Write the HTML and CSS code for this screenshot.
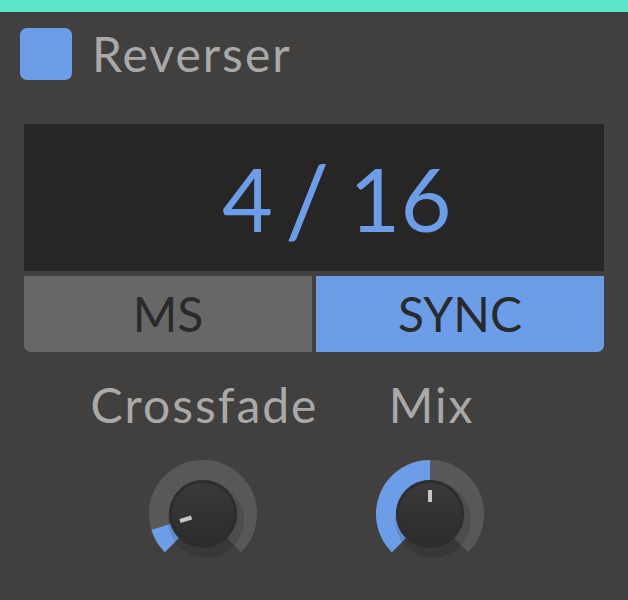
FILE: index.html
```html
<!DOCTYPE html>
<html lang="en">
<head>
    <meta charset="UTF-8">
    <meta name="viewport" content="width=device-width, initial-scale=1.0">
    <title>Reverser</title>
    <link rel="stylesheet" href="styles.css">
</head>
<body>
    <div class="top-bar"></div>

    <div class="plugin">
        <div class="header">
            <div class="enable-box"></div>
            <div class="title">Reverser</div>
        </div>

        <div class="display">
            <div class="display-value"><span>4</span><span class="sep">/</span><span>16</span></div>
        </div>
        <div class="mode-switch">
            <div class="mode-btn">MS</div>
            <div class="mode-btn active">SYNC</div>
        </div>

        <div class="knobs">
            <div class="knob-col">
                <div class="knob-label">Crossfade</div>
                <svg class="knob" width="108" height="108" viewBox="0 0 108 108">
                    <path class="track" d="M 22.89 85.11 A 44 44 0 1 1 85.11 85.11"/>
                    <path class="value" d="M 22.89 85.11 A 44 44 0 0 1 11.92 66.86"/>
                    <circle class="shadow" cx="57" cy="60" r="38"/>
                    <circle class="rim" cx="54" cy="54" r="34"/>
                    <circle class="face" cx="54" cy="54" r="31"/>
                    <rect class="pointer" x="52" y="30" width="4" height="12" transform="rotate(-107 54 54)"/>
                </svg>
            </div>
            <div class="knob-col">
                <div class="knob-label">Mix</div>
                <svg class="knob" width="108" height="108" viewBox="0 0 108 108">
                    <path class="track" d="M 22.89 85.11 A 44 44 0 1 1 85.11 85.11"/>
                    <path class="value" d="M 22.89 85.11 A 44 44 0 0 1 54 10"/>
                    <circle class="shadow" cx="57" cy="60" r="38"/>
                    <circle class="rim" cx="54" cy="54" r="34"/>
                    <circle class="face" cx="54" cy="54" r="31"/>
                    <rect class="pointer" x="52" y="30" width="4" height="12"/>
                </svg>
            </div>
        </div>
    </div>

    <svg width="0" height="0" class="defs">
        <defs>
            <linearGradient id="faceGrad" x1="0" y1="0" x2="0" y2="1">
                <stop offset="0" stop-color="#393939"/>
                <stop offset="1" stop-color="#2c2c2c"/>
            </linearGradient>
        </defs>
    </svg>
</body>
</html>
```

FILE: styles.css
```css
body {
    margin: 0;
    background: #42403f;
    font-family: Lato, "Open Sans", sans-serif;
    height: 600px;
    overflow: hidden;
}

.top-bar {
    height: 12px;
    background: #5ce6c8;
}

.plugin {
    padding: 16px 24px 0 24px;
}

.header {
    display: flex;
    align-items: center;
    margin-left: -4px;
    height: 52px;
}

.enable-box {
    width: 52px;
    height: 52px;
    border-radius: 7px;
    background: #6b9de8;
}

.title {
    margin-left: 20px;
    font-size: 48px;
    line-height: 52px;
    letter-spacing: 2px;
    color: #a9a9a9;
}

.display {
    margin-top: 44px;
    height: 147px;
    background: #272625;
    display: flex;
    align-items: center;
}

.display-value {
    display: flex;
    align-items: baseline;
    font-size: 88px;
    line-height: 100px;
    color: #6b9de8;
    padding-bottom: 4px;
    padding-left: 198px;
}

.sep {
    margin: 0 20px 0 12px;
    font-size: 98px;
    transform: translateY(5px);
}

.mode-switch {
    display: flex;
    gap: 4px;
    margin-top: 5px;
    height: 76px;
    border-radius: 0 0 7px 7px;
    overflow: hidden;
}

.mode-btn {
    flex: 1;
    background: #676767;
    color: #2a2a2a;
    font-size: 48px;
    line-height: 76px;
    text-align: center;
}

.mode-btn.active {
    background: #6b9de8;
}

.knobs {
    display: flex;
    padding-left: 66px;
    margin-top: 24px;
}

.knob-col {
    width: 227px;
    display: flex;
    flex-direction: column;
    align-items: center;
}

.knob-label {
    font-size: 48px;
    letter-spacing: 2px;
    margin-right: -2px;
    color: #a9a9a9;
}

.knob {
    margin-top: 27px;
    margin-left: -2px;
}

.track,
.value {
    fill: none;
    stroke-width: 20;
}

.track {
    stroke: #585858;
}

.value {
    stroke: #6b9de8;
}

.shadow {
    fill: rgba(0, 0, 0, 0.12);
}

.rim {
    fill: #2d2d2d;
}

.face {
    fill: url(#faceGrad);
}

.pointer {
    fill: #c6c6c6;
}

.defs {
    position: absolute;
}
```
